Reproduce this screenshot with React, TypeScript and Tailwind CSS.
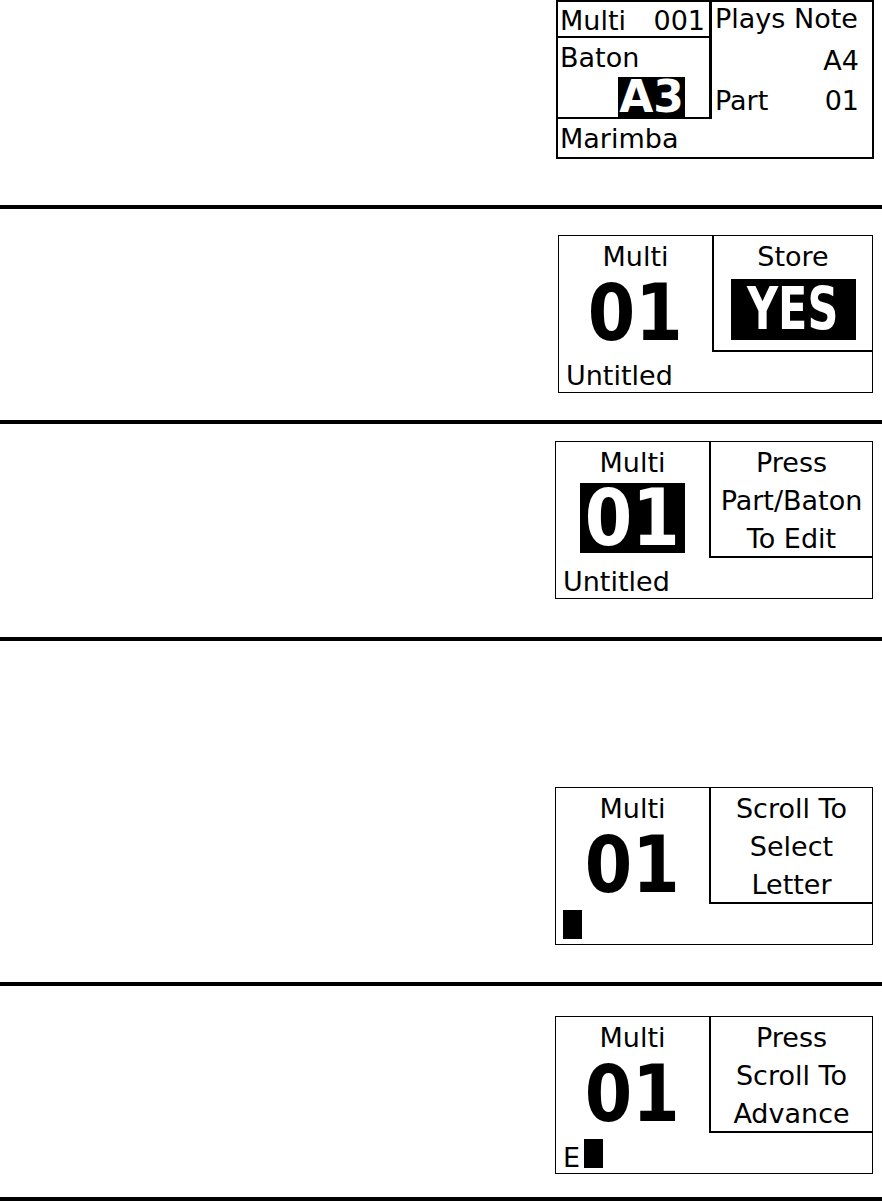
import type { ReactNode } from "react";

const font = "font-['DejaVu_Sans',sans-serif]";

const Rule = () => <div className="h-[4px] bg-black" />;

const Digits = ({ inverse }: { inverse?: boolean }) => (
  <div
    className={
      inverse
        ? "mt-[1px] flex h-[70px] w-[105px] items-center justify-center bg-black text-white"
        : "mt-[2px] flex h-[70px] w-[105px] items-center justify-center text-black"
    }
  >
    <span className="inline-block scale-x-[0.875] text-[78px] font-bold leading-[70px]">01</span>
  </div>
);

const Cursor = () => <div className="h-[29px] w-[19px] bg-black" />;

type BoxProps = {
  width: string;
  inverse?: boolean;
  right: ReactNode;
  bottom: ReactNode;
};

const LcdBox = ({ width, inverse, right, bottom }: BoxProps) => (
  <div className={`${width} flex h-[158px] border border-black bg-white text-black`}>
    <div className="flex w-[153px] flex-col items-center">
      <div className="pt-[2px] text-[27px] leading-[38px]">Multi</div>
      <Digits inverse={inverse} />
      <div className="mt-auto self-stretch">{bottom}</div>
    </div>
    <div className="flex flex-1 flex-col">
      <div className="h-[116px] border-b-2 border-l-2 border-black pt-[2px] text-center text-[27px] leading-[38px]">
        {right}
      </div>
    </div>
  </div>
);

const NameRow = ({ children }: { children: ReactNode }) => (
  <div className="h-[32px] pl-[7px] text-[27px] leading-[32px]">{children}</div>
);

const CursorRow = ({ letter }: { letter?: string }) => (
  <div className="flex h-[34px] items-end pb-[5px] pl-[7px]">
    {letter && <span className="mb-[-3px] mr-[4px] text-[27px] leading-[27px]">{letter}</span>}
    <Cursor />
  </div>
);

const StatusBox = () => (
  <div className="flex h-[159px] w-[318px] flex-col border-2 border-black bg-white text-[27px] text-black">
    <div className="flex h-[117px]">
      <div className="flex w-[154px] flex-col border-r-[3px] border-black">
        <div className="flex h-[36px] justify-between border-b-2 border-black pl-[2px] pr-[4px] leading-[37px]">
          <span>Multi</span>
          <span>001</span>
        </div>
        <div className="flex flex-1 flex-col border-b-2 border-black">
          <div className="pl-[2px] leading-[39px]">Baton</div>
          <div className="mr-[24px] flex h-[40px] w-[67px] items-center justify-center self-end bg-black text-[44px] font-bold leading-[40px] text-white">
            A3
          </div>
        </div>
      </div>
      <div className="flex flex-1 flex-col pl-[3px] pr-[13px]">
        <div className="leading-[33px]">Plays Note</div>
        <div className="text-right leading-[51px]">A4</div>
        <div className="flex justify-between leading-[30px]">
          <span>Part</span>
          <span>01</span>
        </div>
      </div>
    </div>
    <div className="pl-[2px] leading-[40px]">Marimba</div>
  </div>
);

export default function App() {
  return (
    <div className={`${font} w-full bg-white`}>
      <section className="h-[205px] pl-[556px]">
        <StatusBox />
      </section>
      <Rule />
      <section className="h-[211px] pl-[558px] pt-[26px]">
        <LcdBox
          width="w-[315px]"
          right={
            <div className="flex flex-col items-center">
              <div>Store</div>
              <div className="mt-[3px] flex h-[61px] w-[125px] items-center justify-center bg-black text-white">
                <span className="inline-block scale-x-[0.74] text-[58px] font-bold leading-[61px]">YES</span>
              </div>
            </div>
          }
          bottom={<NameRow>Untitled</NameRow>}
        />
      </section>
      <Rule />
      <section className="h-[213px] pl-[555px] pt-[17px]">
        <LcdBox
          width="w-[318px]"
          inverse
          right={
            <>
              <div>Press</div>
              <div>Part/Baton</div>
              <div>To Edit</div>
            </>
          }
          bottom={<NameRow>Untitled</NameRow>}
        />
      </section>
      <Rule />
      <section className="h-[341px] pl-[555px] pt-[146px]">
        <LcdBox
          width="w-[318px]"
          right={
            <>
              <div>Scroll To</div>
              <div>Select</div>
              <div>Letter</div>
            </>
          }
          bottom={<CursorRow />}
        />
      </section>
      <Rule />
      <section className="h-[211px] pl-[555px] pt-[30px]">
        <LcdBox
          width="w-[318px]"
          right={
            <>
              <div>Press</div>
              <div>Scroll To</div>
              <div>Advance</div>
            </>
          }
          bottom={<CursorRow letter="E" />}
        />
      </section>
      <Rule />
    </div>
  );
}
